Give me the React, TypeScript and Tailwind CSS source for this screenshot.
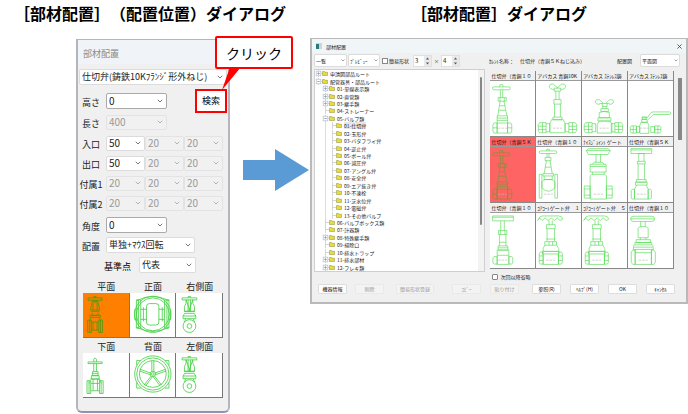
import React, { useState } from 'react';
import clsx from 'clsx';

type TreeRow = {
  depth: number;
  label: string;
  mark?: '+' | '-';
};

const TREE: TreeRow[] = [
  { depth: 0, label: '申請図部品ルート', mark: '+' },
  { depth: 0, label: '配管器具・部品ルート', mark: '-' },
  { depth: 1, label: '01-単線表示類', mark: '+' },
  { depth: 1, label: '02-直管類', mark: '+' },
  { depth: 1, label: '03-継手類', mark: '+' },
  { depth: 1, label: '04-ストレーナー' },
  { depth: 1, label: '05-バルブ類', mark: '-' },
  { depth: 2, label: '01-仕切弁' },
  { depth: 2, label: '02-玉形弁' },
  { depth: 2, label: '03-バタフライ弁' },
  { depth: 2, label: '04-逆止弁' },
  { depth: 2, label: '05-ボール弁' },
  { depth: 2, label: '06-減圧弁' },
  { depth: 2, label: '07-アングル弁' },
  { depth: 2, label: '08-安全弁' },
  { depth: 2, label: '09-エア抜き弁' },
  { depth: 2, label: '10-不凍栓' },
  { depth: 2, label: '11-芝水位弁' },
  { depth: 2, label: '12-電磁弁' },
  { depth: 2, label: '13-その他バルブ' },
  { depth: 1, label: '06-バルブボックス類' },
  { depth: 1, label: '07-計器類' },
  { depth: 1, label: '08-特殊継手類', mark: '+' },
  { depth: 1, label: '09-掃除口' },
  { depth: 1, label: '10-排水トラップ' },
  { depth: 1, label: '11-排水部材', mark: '+' },
  { depth: 1, label: '12-フレキ類', mark: '+' },
];

// Outlines are drawn on a 138 x 165 sheet
const GATE =
  'M8 21a4 4 0 0 1 4-5h46a4 4 0 0 1 0 9H12a4 4 0 0 1-4-4M29 16l2-7h8l2 7M32 25v24M39 25v24M25 49h25v11H25zM31 49v11M44 49v11M31 60l-7 45M43 60l9 45M29 74h17M27 88h21M22 105h32v22H22zM22 112h32M22 119h32M22 127v31h32v-31M9 133l3-6h10v31H12l-3-6zM67 133l-3-6H54v31h10l3-6zM9 142h13M54 142h13';
const WING =
  'M66 20c-2-6-8-7-12-12-5-2-13 0-13 6 0 7 8 12 15 9M66 20c2-6 8-7 12-12 5-2 13 0 13 6 0 7-8 12-15 9M56 20h20v9H56zM61 29v26M71 29v26M55 55h22v14H55zM57 69v40M75 69v40M52 109h28v8H52zM48 117h36l5 10v30H43v-30z';
const UNIONS =
  'M7 132l4-6h20v31H11l-4-6zM31 129h11v25H31M7 137h24M7 147h24M20 126v31M125 132l-4-6h-20v31h20l4-6zM101 129H90v25h11M101 137h24M101 147h24M112 126v31';
const SHORT_WING =
  'M64 67c-2-6-6-7-10-11-5-2-13 0-13 5 0 7 8 10 14 8M74 67c2-6 6-7 10-11 5-2 13 0 13 5 0 7-8 10-14 8M54 67h30M62 67v9h15v-9M64 76v7M74 76v7M58 83h23v9H58zM53 95q16-8 31 0v16H53zM49 111h40v10H49zM53 121l-6 10v27h45v-27l-6-10z';
const COCKED =
  'M42 111h17l11-15q3-3 8-3h50l4 3-4 5H79l-17 15M44 108h12v8H44zM42 116h17v9H42zM40 125h20l4 10v24H36v-24zM7 141l3-5h16v22H10l-3-5zM26 138h10v18H26zM101 141l-3-5H82v22h16l3-5zM82 138H70v18h12zM7 147h19M82 147h19M16 136v22M92 136v22';
const FLANGED =
  'M10 14a4 4 0 0 1 4-4h46a4 4 0 0 1 0 8H14a4 4 0 0 1-4-4M33 10V5h8v5M34 18v12M40 18v12M28 30h18v10H28zM32 40l-7 40M43 40l7 40M28 60h18M21 80h33v7H21zM25 87v11h25V87M18 106q4-8 12-8h16q8 0 12 8v18q-20 20-40 0zM10 82h8v73h-8zM58 82h8v73h-8z';
const BLOCK =
  'M20 3h60l7 6-7 12H20L13 9zM13 9h74M43 21v24M57 21v24M32 51l5-6h26l5 6M25 51h49v24H25zM25 58h49M32 75v7M68 75v7M25 87l5-5h40l5 5v71H25zM7 118h18v37H7zM75 118h18v37H75zM7 127h18M7 146h18M75 127h18M75 146h18';
const FLAT_WHEEL =
  'M9 3h64v15H9zM9 7h64M30 18h22M33 18v24M49 18v24M29 42h24v8H29zM31 50v48M51 50v48M26 98h30v8H26zM23 106h36v9H23zM26 115l-6 13v30h42v-30l-6-13M10 131l3-3h7v30h-7l-3-3zM72 131l-3-3h-7v30h7l3-3z';
const BOX_WHEEL =
  'M8 7h64v15H8zM8 11h64M33 22v30M44 22v30M26 52h26v12H26zM32 52v12M46 52v12M29 64v35M49 64v35M29 88h20M25 99h30v13H25zM25 105h30M22 112h36v44H22zM9 136l3-4h10v23H12l-3-4zM70 136l-3-4h-9v23h9l3-4zM22 128h36';
const BELL =
  'M9 17q0-9 11-10h50q11 1 12 10l-8 4-9-8-9 8-9-8-10 8-9-8-9 8-8-8-6 8zM40 21v13M50 21v13M32 34h27v12H32zM34 46v38M57 46v38M32 78h27M27 86h36v11H27zM40 86v11M51 86v11M27 97l-5 10v9h48v-9l-6-10M20 116h51v8H20zM22 124v32h47v-32M10 123l3-5h9v37h-9l-3-5zM81 123l-3-5h-9v37h9l3-5zM10 130h12M10 144h12M69 130h12M69 144h12';
const OVAL =
  'M8 16q0-8 10-8h54q10 0 10 8t-10 8H18q-10 0-10-8M8 16h74M39 24v16M53 24v16M31 46l5-6h21l5 6v28H31zM38 74v6M55 74v6M25 80h44v9H25zM21 89h52v7H21zM18 96l-2 14h62l-2-14M18 103h58M22 110v46M72 110v46M10 118l5-6h7v44h-7l-5-6zM84 118l-5-6h-7v44h7l5-6zM22 120h50M22 156h50';

const PARTS = [
  { label: '仕切弁（青銅１０', d: GATE, mid: 38 },
  { label: 'アバカス 青銅10K', d: WING + UNIONS, mid: 66 },
  { label: 'アバカス ｽﾃﾝﾚｽ鋳', d: SHORT_WING + UNIONS, mid: 68 },
  { label: 'アバカス ｽﾃﾝﾚｽ鋳', d: COCKED, mid: 50 },
  { label: '仕切弁（青銅５Ｋ', d: GATE, mid: 38 },
  { label: '仕切弁（青銅１０', d: FLANGED, mid: 38 },
  { label: 'ﾅｲｽｼﾞｮｲﾝﾄ ゲート', d: BLOCK, mid: 50 },
  { label: '仕切弁（青銅５Ｋ', d: FLAT_WHEEL, mid: 41 },
  { label: '仕切弁（青銅１０', d: BOX_WHEEL, mid: 39 },
  { label: 'ｺｱｺｰﾄゲート弁　１', d: BELL, mid: 45 },
  { label: 'ｺｱｺｰﾄゲート弁　５', d: BELL, mid: 45 },
  { label: '仕切弁（青銅１０', d: OVAL, mid: 47 },
];

const PLAN =
  'M15 14h42v7H15zM33 14v-4h6v4M33 21v9M39 21v9M28 24l-6 26M44 24l6 26M26 24h20M30 30v20M42 30v20M22 50h28M24 54h25M27 58v8h18v-8M20 66h32v6H20zM24 72q-4 6-4 12M48 72q4 6 4 12M20 80h-6v37h6zM20 80h5v37h-5M52 80h-5v37h5zM52 80h6v37h-6M25 86h22M25 110h22M30 86v24M42 86v24';
const BOTTOM =
  'M15 26h42v5H15zM32 26v-8l4-4 4 4v8M32 31v24M40 31v24M28 55h17v12H28zM28 61h17M25 67h23v10H25zM22 77h28v7q4 2 4 6M22 84q-4 2-4 6M12 82h6v38h-6zM18 82h5v38h-5M54 82h-5v38h5zM54 82h6v38h-6M24 90h25M24 112h25M30 77v35M43 77v35';
const SIDE =
  'M18 14h44v6H18zM36 14v-4h7v4M36 20v34M43 20v34M30 20v10l-5 10v14h30V40l-5-10V20M30 20l12 34M50 20L38 54M24 54h32M26 60l-5 8v8h38v-8l-5-8zM21 68h38M28 76q0 6-4 10M52 76q0 6 4 10';

function FrontView() {
  return (
    <>
      <circle cx="68" cy="63" r="54" />
      <circle cx="68" cy="63" r="49" />
      <path d="M19 20h13v84H19zM25 20v84M103 20h13v84h-13zM110 20v84M32 48h17M32 78h17M86 48h17M86 78h17M14 48v30h5M121 48v30h-5M40 42v42M96 42v42M49 40q0-9 9-9h19q9 0 9 9v46q0 9-9 9H58q-9 0-9-9z" />
      <path d="M20 22q48-24 96 0M20 102q48 24 96 0" />
    </>
  );
}

function WheelView() {
  return (
    <>
      <circle cx="68" cy="62" r="54" />
      <circle cx="68" cy="62" r="48" />
      <circle cx="68" cy="62" r="40" />
      <circle cx="68" cy="62" r="8" />
      <circle cx="68" cy="62" r="4" />
      <path d="M65 55V22M71 55V22M61 59L30 48M60 64L28 53M75 59l31-11M76 64l32-11M63 68L42 95M67 70L46 98M73 68l21 27M69 70l21 28M20 36V22h12M104 22h12v14M20 88v16h12M104 104h12V88" />
    </>
  );
}

function SideView() {
  return (
    <>
      <path d={SIDE} />
      <circle cx="40" cy="98" r="19" />
      <circle cx="40" cy="98" r="7" />
    </>
  );
}

const VIEWS = [
  { label: '平面', drawing: <path d={PLAN} /> },
  { label: '正面', drawing: <FrontView /> },
  { label: '右側面', drawing: <SideView /> },
  { label: '下面', drawing: <path d={BOTTOM} /> },
  { label: '背面', drawing: <WheelView /> },
  { label: '左側面', drawing: <SideView /> },
];

type DropDownProps = {
  label: string;
  value: string;
  disabled?: boolean;
  framed?: boolean;
  small?: boolean;
  className?: string;
};

function DropDown({ label, value, disabled, framed, small, className }: DropDownProps) {
  return (
    <div className={clsx('relative', className)}>
      <select
        aria-label={label}
        disabled={disabled}
        className={clsx(
          'block size-full appearance-none rounded-[2px] border outline-none',
          small ? 'px-px text-[5px]' : 'px-[2px]',
          disabled ? 'bg-[#f1f1f1] text-[#999] opacity-100' : 'bg-white text-[#222]',
          framed ? 'border-[#aaa]' : disabled ? 'border-[#e3e3e3]' : 'border-[#dcdcdc]'
        )}
      >
        <option>{value}</option>
      </select>
      <svg
        viewBox="0 0 8 5"
        className={clsx(
          'pointer-events-none absolute inset-y-0 my-auto',
          small ? 'right-[2px] w-1' : 'right-1 w-[6px]'
        )}
        fill="none"
        stroke={disabled ? '#aaa' : '#666'}
        strokeWidth={1.2}
      >
        <path d="M1 1l3 3 3-3" />
      </svg>
    </div>
  );
}

function Row({ label, className, children }: { label: string; className?: string; children: React.ReactNode }) {
  return (
    <div className={clsx('grid grid-cols-[26px_1fr] items-center gap-[2px] pr-[5px]', className)}>
      <span className="pt-1 text-center text-[9px] leading-3 whitespace-nowrap text-[#222]">{label}</span>
      {children}
    </div>
  );
}

function PlacementDialog() {
  const [view, setView] = useState('平面');

  return (
    <div className="relative">
      <section className="overflow-hidden rounded-b-md border-2 border-t border-[#b4b6be] border-b-[#8e95b3] bg-[#f0f0f0] pb-[13px] text-[10px] leading-3">
        <header className="flex h-6 items-center bg-[#f0f3f7] pt-1 pl-[5px] text-[9px] text-[#8a8a8a]">
          部材配置
        </header>
        <DropDown
          label="部材"
          value="仕切弁(鋳鉄10Kﾌﾗﾝｼﾞ形外ねじ)"
          className="mx-px mt-[5px] h-4 text-[9px]"
        />
        <Row label="高さ" className="mt-1">
          <div className="flex justify-between">
            <DropDown label="高さ" value="0" framed className="mt-1 h-4 w-[61px]" />
            <button
              type="button"
              className="-mr-1 h-6 w-8 border-2 border-[#f00] bg-white text-[9px] whitespace-nowrap"
            >
              検索
            </button>
          </div>
        </Row>
        <Row label="長さ" className="mt-px">
          <DropDown label="長さ" value="400" disabled className="h-[15px] w-[61px]" />
        </Row>
        <div className="mt-[5px] flex flex-col gap-1">
          {['入口', '出口', '付属1', '付属2'].map((name, i) => (
            <Row key={name} label={name}>
              <div className="grid grid-cols-3">
                <DropDown label={`${name} 1`} value={i < 2 ? '50' : '20'} disabled={i > 1} className="h-[15px]" />
                <DropDown label={`${name} 2`} value="20" disabled className="h-[15px]" />
                <DropDown label={`${name} 3`} value="20" disabled className="h-[15px]" />
              </div>
            </Row>
          ))}
        </div>
        <Row label="角度" className="mt-[6px]">
          <DropDown label="角度" value="0" framed className="h-4 w-[61px]" />
        </Row>
        <Row label="配置" className="mt-1">
          <DropDown label="配置" value="単独+ﾏｳｽ回転" className="h-4 w-[89px] text-[9px]" />
        </Row>
        <div className="mt-1 flex items-center gap-2 pl-[26px] text-[9px]">
          <span className="pt-1">基準点</span>
          <DropDown label="基準点" value="代表" className="h-4 w-[57px]" />
        </div>
        <div className="mt-2 grid grid-cols-3 gap-y-[3px] px-[5px]">
          {VIEWS.map((v) => (
            <label key={v.label} className="flex flex-col text-center text-[9px] text-[#222]">
              {v.label}
              <button
                type="button"
                aria-label={v.label}
                onClick={() => setView(v.label)}
                className={clsx(
                  'h-[45px] border-r border-b border-[#777]',
                  view === v.label ? 'bg-[#ff8000]' : 'bg-white'
                )}
              >
                <svg
                  viewBox="0 0 136 130"
                  className="size-full"
                  fill="none"
                  stroke={view === v.label ? '#4a9a10' : '#3fcf3f'}
                  strokeWidth={2.4}
                >
                  {v.drawing}
                </svg>
              </button>
            </label>
          ))}
        </div>
      </section>

      <div className="absolute -top-[3px] left-[139px] flex h-[33px] w-[78px] items-center justify-center rounded-[2px] border-2 border-[#f00] bg-white text-sm whitespace-nowrap text-black">
        クリック
        <svg viewBox="0 0 20 24" className="absolute top-[29px] left-1 h-6 w-5" fill="#f00">
          <path d="M9 0h11L1 23z" />
        </svg>
      </div>
    </div>
  );
}

function TreeItem({ row, selected }: { row: TreeRow; selected: boolean }) {
  return (
    <li className="flex min-h-0 flex-1 items-center text-[5px] leading-[7px] whitespace-nowrap text-[#222]">
      {Array.from({ length: row.depth }, (_, i) => (
        <span key={i} className="flex w-[7px] justify-center self-stretch">
          {i > 0 && <span className="w-px bg-[#ddd]" />}
        </span>
      ))}
      <svg viewBox="0 0 7 7" className="size-[7px]" fill="none" stroke="#ccc" strokeWidth={0.8}>
        <path d="M3.5 0v7M3.5 3.5h3.5" />
        {row.mark && (
          <>
            <rect x="1.2" y="1.2" width="4.6" height="4.6" fill="#fff" stroke="#b8c2d0" />
            <path d={row.mark === '+' ? 'M2.2 3.5h2.6M3.5 2.2v2.6' : 'M2.2 3.5h2.6'} stroke="#8a9ab0" />
          </>
        )}
      </svg>
      <svg viewBox="0 0 12 10" className="mr-[2px] h-[5px] w-[6px]">
        <path d="M1 1h4l1 1.5h5V9H1z" fill="#e6dc3c" stroke="#8c8a3c" />
      </svg>
      <span className={clsx(selected && 'bg-[#e8e8e8]')}>{row.label}</span>
    </li>
  );
}

function Spinner({ label, value }: { label: string; value: string }) {
  return (
    <span className="flex h-3 w-[19px] border border-[#e0e0e0] bg-white">
      <input aria-label={label} defaultValue={value} className="w-full min-w-0 pl-px text-[6px] outline-none" />
      <button type="button" aria-label={`${label} 増減`} className="w-[7px] shrink-0 bg-[#e9e9e9]">
        <svg viewBox="0 0 6 10" className="size-full" fill="#555">
          <path d="M3 1.5l1.6 2H1.4zM3 8.5l1.6-2H1.4z" />
        </svg>
      </button>
    </span>
  );
}

function ActionButton({ children, disabled, wide }: { children: string; disabled?: boolean; wide?: boolean }) {
  return (
    <button
      type="button"
      disabled={disabled}
      className={clsx(
        'h-[10px] rounded-[1px] border text-[5px] leading-[8px] whitespace-nowrap',
        wide ? 'w-[38px]' : 'w-[29px]',
        disabled ? 'border-[#e9e9e9] bg-[#f3f3f3] text-[#999]' : 'border-[#ddd] bg-[#fdfdfd] text-[#111]'
      )}
    >
      {children}
    </button>
  );
}

function PartsDialog() {
  const [current, setCurrent] = useState(4);

  return (
    <section className="border-2 border-t border-[#b9b9b9] bg-[#f0f0f0] pb-2 text-[5px] leading-[7px] text-[#222]">
      <header className="flex h-[14px] items-center gap-1 bg-[#f0f5f8] px-1">
        <svg viewBox="0 0 6 6" className="size-[6px]">
          <path d="M0 0h6v6H0z" fill="#cfd6da" />
          <path d="M0 1h3v5H0z" fill="#2b7a78" />
        </svg>
        部材配置
        <button type="button" aria-label="閉じる" className="ml-auto">
          <svg viewBox="0 0 6 6" className="size-[5px]" stroke="#333" strokeWidth={0.9}>
            <path d="M0.5 0.5l5 5M5.5 0.5l-5 5" />
          </svg>
        </button>
      </header>

      <div className="mt-px flex items-center pr-[6px] pl-[2px] whitespace-nowrap">
        <DropDown small label="表示" value="一覧" className="h-[13px] w-[33px]" />
        <DropDown small label="表示形式" value="ﾌﾟﾚﾋﾞｭｰ" className="ml-px h-[13px] w-8" />
        <label className="ml-[2px] flex items-center gap-px">
          <input type="checkbox" className="size-[6px] appearance-none border border-[#888] bg-white" />
          簡易形状
        </label>
        <span className="ml-1 flex items-center gap-[2px]">
          <Spinner label="列数" value="3" />
          ×
          <Spinner label="行数" value="4" />
        </span>
        <span className="ml-[29px]">ｶﾚﾝﾄ名称：</span>
        <span className="ml-[6px]">仕切弁（青銅５Ｋねじ込み）</span>
        <span className="mr-2 ml-auto">配置図</span>
        <DropDown small label="配置図" value="平面図" className="h-[13px] w-10" />
      </div>

      <div className="mt-[2px] grid grid-cols-[171fr_200fr] pl-[2px]">
        <div className="mb-2 flex border border-[#cfcfcf] bg-white">
          <ul className="flex flex-1 flex-col">
            {TREE.map((row) => (
              <TreeItem key={row.label} row={row} selected={row.label === '01-仕切弁'} />
            ))}
          </ul>
          <div className="w-[6px] bg-[#f3f3f3] pt-[7px]">
            <div className="mx-auto h-[148px] w-[2px] rounded-full bg-[#888]" />
          </div>
        </div>

        <div className="pt-[2px] pl-[5px]">
          <div className="flex">
            <div className="grid flex-1 grid-cols-4">
              {PARTS.map((part, i) => (
                <button
                  key={i}
                  type="button"
                  onClick={() => setCurrent(i)}
                  className={clsx(
                    'min-w-0 border-r border-b border-[#888] text-left',
                    i === current ? 'bg-[#ff6464]' : 'bg-white'
                  )}
                >
                  <span
                    className={clsx(
                      'block h-[10px] overflow-hidden border-b border-[#999] pl-px leading-[9px] whitespace-nowrap text-[#111]',
                      i === current ? 'bg-[#ff6464]' : 'bg-[#f0f0f0]'
                    )}
                  >
                    {part.label}
                  </span>
                  <svg
                    viewBox="0 0 138 165"
                    className="h-[55px] w-full"
                    fill="none"
                    stroke={i === current ? '#6f9a2e' : '#55dc55'}
                    strokeWidth={2}
                  >
                    <path d={part.d} />
                    <path d={`M${part.mid - 14} 143h28`} stroke="#bbb" strokeDasharray="8 3" />
                  </svg>
                </button>
              ))}
            </div>
            <div className="w-[12px] pt-[7px]">
              <div className="mx-auto h-[62px] w-1 bg-[#888]" />
            </div>
          </div>
          <label className="mt-1 flex items-center gap-[2px] pl-[2px]">
            <input type="checkbox" className="size-[6px] appearance-none rounded-[1px] border border-[#888] bg-white" />
            次回以降省略
          </label>
        </div>
      </div>

      <div className="mt-1 flex items-center justify-between pr-[11px] pl-[6px]">
        <div className="flex gap-2">
          <ActionButton>機器情報</ActionButton>
          <ActionButton disabled>削除</ActionButton>
          <span className="ml-1">
            <ActionButton disabled wide>簡易形状登録</ActionButton>
          </span>
        </div>
        <div className="flex gap-[9px]">
          <ActionButton disabled>ｺﾋﾟｰ</ActionButton>
          <ActionButton disabled>貼り付け</ActionButton>
          <span className="ml-1 flex gap-[9px]">
            <ActionButton>参照(R)</ActionButton>
            <ActionButton>ﾍﾙﾌﾟ(H)</ActionButton>
            <ActionButton>OK</ActionButton>
            <ActionButton>ｷｬﾝｾﾙ</ActionButton>
          </span>
        </div>
      </div>
    </section>
  );
}

export default function App() {
  return (
    <main className="grid grid-cols-[310fr_378fr] bg-white font-['Noto_Sans_CJK_JP','Noto_Sans',sans-serif] text-black [text-spacing-trim:space-all]">
      <div>
        <h2 className="pt-px pl-[14px] text-base leading-6 font-bold whitespace-nowrap">
          ［部材配置］（配置位置）ダイアログ
        </h2>
        <div className="mt-[14px] grid grid-cols-[76fr_154fr_80fr]">
          <div className="col-start-2">
            <PlacementDialog />
          </div>
          <svg viewBox="0 0 66 42" className="mt-[110px] ml-[13px] w-[66px]" fill="#5b9bd5">
            <path d="M0 11h32V0l34 21-34 21V31H0z" />
          </svg>
        </div>
      </div>
      <div>
        <h2 className="pt-px text-center text-base leading-6 font-bold whitespace-nowrap">
          ［部材配置］ダイアログ
        </h2>
        <div className="mt-[13px]">
          <PartsDialog />
        </div>
      </div>
    </main>
  );
}
